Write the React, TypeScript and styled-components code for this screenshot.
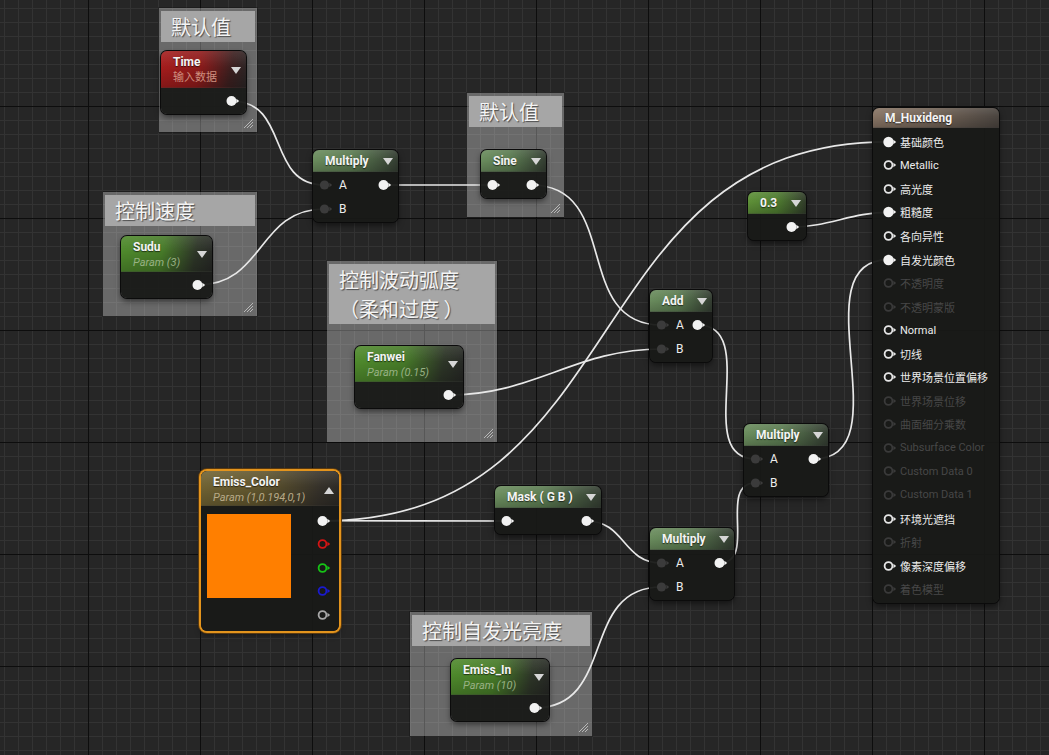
import React from "react"
import styled, { createGlobalStyle, css } from "styled-components"

const GlobalStyle = createGlobalStyle`
  html, body {
    margin: 0;
    padding: 0;
    background: #262626;
  }
  body {
    font-family: Roboto, "Noto Sans CJK SC", sans-serif;
    overflow: hidden;
  }
`

const Canvas = styled.div`
  position: relative;
  width: 1049px;
  height: 755px;
  overflow: hidden;
  background-color: #262626;
  background-image: linear-gradient(to right, #0d0d0d 1px, transparent 1px),
    linear-gradient(to bottom, #0d0d0d 1px, transparent 1px),
    linear-gradient(to right, #333333 1px, transparent 1px),
    linear-gradient(to bottom, #333333 1px, transparent 1px);
  background-size: 112px 112px, 112px 112px, 14px 14px, 14px 14px;
  background-position: 88px 106px, 88px 106px, 4px 8px, 4px 8px;
`

type Box = { $x: number; $y: number; $w: number; $h?: number }

const CommentBox = styled.div<Box>`
  position: absolute;
  left: ${(p) => p.$x}px;
  top: ${(p) => p.$y}px;
  width: ${(p) => p.$w}px;
  height: ${(p) => p.$h}px;
  box-sizing: border-box;
  padding: 3px 2px 0;
  background: rgba(255, 255, 255, 0.31);
  box-shadow: 0 0 0 1px rgba(0, 0, 0, 0.22);
`

const CommentTitle = styled.div`
  background: #a6a6a6;
  min-height: 31px;
  padding: 1px 9px 1px 10px;
  box-sizing: border-box;
  font: 20px/29px "Noto Sans CJK SC", sans-serif;
  color: #f4f4f4;
  text-shadow: 1px 1px 1px rgba(0, 0, 0, 0.55);
  white-space: pre;
`

const Grip = styled.svg`
  position: absolute;
  right: 3px;
  bottom: 3px;
`

const Wires = styled.svg`
  position: absolute;
  left: 0;
  top: 0;
  pointer-events: none;
`

type HeaderKind = "op" | "param" | "const" | "red" | "gold" | "brown"

const headerBg: Record<HeaderKind, string> = {
  op: "linear-gradient(90deg, #6b8d5e 0%, #5b7b51 45%, #343d32 100%)",
  param: "linear-gradient(100deg, #4f8a2c 0%, #467a28 45%, #2d3527 80%, #262725 100%)",
  const: "linear-gradient(90deg, #5e9038 0%, #4e7b30 50%, #313c2a 100%)",
  red: "linear-gradient(100deg, #a61d1d 0%, #8d1a1a 45%, #3c1f1f 80%, #2a2525 100%)",
  gold: "linear-gradient(100deg, #706334 0%, #5f542d 45%, #35312a 85%, #2c2a26 100%)",
  brown: "linear-gradient(90deg, #877464 0%, #6f6155 50%, #4a443f 100%)",
}

const subColor: Record<HeaderKind, string> = {
  op: "#9db58a",
  param: "#98b184",
  const: "#98b184",
  red: "#cf8f7f",
  gold: "#b8aa88",
  brown: "#bbb",
}

const GraphNode = styled.div<Box & { $glow?: boolean }>`
  position: absolute;
  left: ${(p) => p.$x}px;
  top: ${(p) => p.$y}px;
  width: ${(p) => p.$w}px;
  border-radius: 6px;
  background: rgba(24, 25, 23, 0.95);
  box-shadow: 0 0 0 1px #0b0b0b, 0 3px 6px rgba(0, 0, 0, 0.55);
  ${(p) =>
    p.$glow &&
    css`
      box-shadow: 0 0 0 2px #e3941d, 0 0 0 3px #5a3a10, 0 3px 6px rgba(0, 0, 0, 0.55);
    `}
`

const NodeHeader = styled.div<{ $kind: HeaderKind; $h: number; $pt?: number }>`
  display: flex;
  align-items: center;
  justify-content: space-between;
  height: ${(p) => p.$h}px;
  padding: ${(p) => p.$pt ?? 1}px 5px 0 12px;
  box-sizing: border-box;
  border-radius: 6px 6px 0 0;
  background: linear-gradient(
      180deg,
      rgba(255, 255, 255, 0.1),
      rgba(255, 255, 255, 0) 45%,
      rgba(0, 0, 0, 0.18)
    ),
    ${(p) => headerBg[p.$kind]};
  border-bottom: 1px solid rgba(0, 0, 0, 0.35);
`

const TitleStack = styled.div`
  display: flex;
  flex-direction: column;
  min-width: 0;
`

const NodeTitle = styled.span`
  font-weight: 700;
  font-size: 12px;
  line-height: 15px;
  color: #f4f4f4;
  text-shadow: 0 1px 1px rgba(0, 0, 0, 0.6);
  white-space: nowrap;
`

const NodeSub = styled.span<{ $kind: HeaderKind; $plain?: boolean }>`
  font-size: 11px;
  line-height: 15px;
  font-style: ${(p) => (p.$plain ? "normal" : "italic")};
  color: ${(p) => subColor[p.$kind]};
  white-space: nowrap;
`

const Caret = styled.span<{ $up?: boolean }>`
  flex: none;
  width: 0;
  height: 0;
  border-left: 5px solid transparent;
  border-right: 5px solid transparent;
  ${(p) =>
    p.$up
      ? css`
          border-bottom: 7px solid #d6d6d6;
        `
      : css`
          border-top: 7px solid #d6d6d6;
        `}
`

const NodeBody = styled.div<{ $pad?: number }>`
  padding: ${(p) => p.$pad ?? 1}px 0;
`

const PinRow = styled.div<{ $h?: number; $pl?: number; $pr?: number }>`
  display: flex;
  align-items: center;
  height: ${(p) => p.$h ?? 24}px;
  padding: 0 ${(p) => p.$pr ?? 6}px 0 ${(p) => p.$pl ?? 6}px;
`

const Spacer = styled.div`
  flex: 1;
`

const PinLabel = styled.span<{ $dim?: boolean; $gap?: number }>`
  margin-left: ${(p) => p.$gap ?? 6}px;
  font-size: 12px;
  color: ${(p) => (p.$dim ? "#474747" : "#ececec")};
  white-space: nowrap;
`

const ResultLabel = styled(PinLabel)`
  font-size: 11px;
`

const ColorBody = styled.div`
  display: flex;
  justify-content: space-between;
  align-items: flex-start;
  padding: 3px 8px 4px 6px;
`

const Swatch = styled.div`
  width: 84px;
  height: 84px;
  margin-top: 5px;
  background: #ff7f00;
`

const PinColumn = styled.div`
  display: flex;
  flex-direction: column;
`

const PinSvg = styled.svg`
  flex: none;
  display: block;
`

type PinProps = { ring?: boolean; color?: string; r?: number }

const Pin = ({ ring, color = "#f2f2f2", r = 5 }: PinProps) => (
  <PinSvg width="14" height="12" viewBox="0 0 14 12">
    {ring ? (
      <circle cx="5.5" cy="6" r="3.9" fill="none" stroke={color} strokeWidth="1.8" />
    ) : (
      <circle cx="5.5" cy="6" r={r} fill={color} />
    )}
    <path d="M10.4 3.7 L13.2 6 L10.4 8.3 Z" fill={color} />
  </PinSvg>
)

const ResizeGrip = () => (
  <Grip width="11" height="11" viewBox="0 0 11 11">
    <path d="M1 10 L10 1 M4 10 L10 4 M7 10 L10 7" stroke="#b8b8b8" strokeWidth="1" />
  </Grip>
)

type Geo = { x: number; y: number; w: number; head: number }

const N: Record<string, Geo> = {
  time: { x: 161, y: 51, w: 85, head: 37 },
  sudu: { x: 121, y: 236, w: 91, head: 36 },
  mul1: { x: 313, y: 150, w: 85, head: 22 },
  sine: { x: 481, y: 150, w: 65, head: 22 },
  fanwei: { x: 355, y: 346, w: 108, head: 36 },
  add: { x: 650, y: 290, w: 62, head: 22 },
  mul2: { x: 744, y: 424, w: 84, head: 22 },
  c03: { x: 748, y: 192, w: 58, head: 22 },
  mask: { x: 495, y: 486, w: 106, head: 22 },
  mul3: { x: 650, y: 528, w: 84, head: 22 },
  emissIn: { x: 451, y: 659, w: 98, head: 36 },
  color: { x: 201, y: 471, w: 138, head: 35 },
  result: { x: 873, y: 108, w: 126, head: 20 },
}

const RESULT_ROW = 23.55

const out = (n: Geo, i = 0): [number, number] => [n.x + n.w - 14.5, n.y + n.head + 1 + 24 * i + 12]
const inp = (n: Geo, i = 0): [number, number] => [n.x + 11.5, n.y + n.head + 1 + 24 * i + 12]
const colorOut = (): [number, number] => [N.color.x + N.color.w - 16.5, N.color.y + N.color.head + 3 + 11.75]
const resultIn = (i: number): [number, number] => [
  N.result.x + 15.5,
  N.result.y + N.result.head + 2 + RESULT_ROW * i + RESULT_ROW / 2,
]

const links: [[number, number], [number, number]][] = [
  [out(N.time), inp(N.mul1, 0)],
  [out(N.sudu), inp(N.mul1, 1)],
  [out(N.mul1), inp(N.sine)],
  [out(N.sine), inp(N.add, 0)],
  [out(N.fanwei), inp(N.add, 1)],
  [out(N.add), inp(N.mul2, 0)],
  [colorOut(), resultIn(0)],
  [colorOut(), inp(N.mask)],
  [out(N.mask), inp(N.mul3, 0)],
  [out(N.emissIn), inp(N.mul3, 1)],
  [out(N.mul3), inp(N.mul2, 1)],
  [out(N.mul2), resultIn(5)],
  [out(N.c03), resultIn(3)],
]

// UE-style spline: horizontal tangents that grow with the distance
const spline = ([x1, y1]: [number, number], [x2, y2]: [number, number]) => {
  const t = (Math.abs(x2 - x1) + Math.abs(y2 - y1)) / 3
  return `M${x1} ${y1} C${x1 + t} ${y1} ${x2 - t} ${y2} ${x2} ${y2}`
}

type OpRow = { label?: string; input?: boolean; output?: boolean }

const OpNode = ({ g, title, kind = "op", rows }: { g: Geo; title: string; kind?: HeaderKind; rows: OpRow[] }) => (
  <GraphNode $x={g.x} $y={g.y} $w={g.w}>
    <NodeHeader $kind={kind} $h={g.head}>
      <NodeTitle>{title}</NodeTitle>
      <Caret />
    </NodeHeader>
    <NodeBody>
      {rows.map((r, i) => (
        <PinRow key={i}>
          {r.input && (r.label ? <Pin color="#3b3b3b" r={4.6} /> : <Pin />)}
          {r.label && <PinLabel>{r.label}</PinLabel>}
          <Spacer />
          {r.output && <Pin />}
        </PinRow>
      ))}
    </NodeBody>
  </GraphNode>
)

const ParamNode = ({ g, title, sub, kind = "param" }: { g: Geo; title: string; sub: string; kind?: HeaderKind }) => (
  <GraphNode $x={g.x} $y={g.y} $w={g.w}>
    <NodeHeader $kind={kind} $h={g.head} $pt={2}>
      <TitleStack>
        <NodeTitle>{title}</NodeTitle>
        <NodeSub $kind={kind} $plain={kind === "red"}>
          {sub}
        </NodeSub>
      </TitleStack>
      <Caret />
    </NodeHeader>
    <NodeBody>
      <PinRow>
        <Spacer />
        <Pin />
      </PinRow>
    </NodeBody>
  </GraphNode>
)

type ResultPin = "on" | "off" | "dis"

const resultRows: [string, ResultPin][] = [
  ["基础颜色", "on"],
  ["Metallic", "off"],
  ["高光度", "off"],
  ["粗糙度", "on"],
  ["各向异性", "off"],
  ["自发光颜色", "on"],
  ["不透明度", "dis"],
  ["不透明蒙版", "dis"],
  ["Normal", "off"],
  ["切线", "off"],
  ["世界场景位置偏移", "off"],
  ["世界场景位移", "dis"],
  ["曲面细分乘数", "dis"],
  ["Subsurface Color", "dis"],
  ["Custom Data 0", "dis"],
  ["Custom Data 1", "dis"],
  ["环境光遮挡", "off"],
  ["折射", "dis"],
  ["像素深度偏移", "off"],
  ["着色模型", "dis"],
]

const ResultNode = () => (
  <GraphNode $x={N.result.x} $y={N.result.y} $w={N.result.w}>
    <NodeHeader $kind="brown" $h={N.result.head} $pt={2}>
      <NodeTitle>M_Huxideng</NodeTitle>
    </NodeHeader>
    <NodeBody $pad={2}>
      {resultRows.map(([label, mode]) => (
        <PinRow key={label} $h={RESULT_ROW} $pl={10}>
          {mode === "on" ? <Pin r={5.2} /> : <Pin ring color={mode === "dis" ? "#3a3a3a" : "#e6e6e6"} />}
          <ResultLabel $gap={3} $dim={mode === "dis"}>
            {label}
          </ResultLabel>
        </PinRow>
      ))}
    </NodeBody>
  </GraphNode>
)

const ColorNode = () => (
  <GraphNode $x={N.color.x} $y={N.color.y} $w={N.color.w} $glow>
    <NodeHeader $kind="gold" $h={N.color.head} $pt={4}>
      <TitleStack>
        <NodeTitle>Emiss_Color</NodeTitle>
        <NodeSub $kind="gold">Param (1,0.194,0,1)</NodeSub>
      </TitleStack>
      <Caret $up />
    </NodeHeader>
    <ColorBody>
      <Swatch />
      <PinColumn>
        <PinRow $h={23.5} $pl={0} $pr={0}>
          <Pin />
        </PinRow>
        {["#d41414", "#16c416", "#1a1ad0", "#a8a8a8"].map((c) => (
          <PinRow key={c} $h={23.5} $pl={0} $pr={0}>
            <Pin ring color={c} />
          </PinRow>
        ))}
      </PinColumn>
    </ColorBody>
  </GraphNode>
)

const Comment = ({ x, y, w, h, children }: { x: number; y: number; w: number; h: number; children: React.ReactNode }) => (
  <CommentBox $x={x} $y={y} $w={w} $h={h}>
    <CommentTitle>{children}</CommentTitle>
    <ResizeGrip />
  </CommentBox>
)

export default function App() {
  return (
    <>
      <GlobalStyle />
      <Canvas>
        <Comment x={159} y={8} w={98} h={124}>
          默认值
        </Comment>
        <Comment x={103} y={192} w={154} h={124}>
          控制速度
        </Comment>
        <Comment x={467} y={93} w={97} h={124}>
          默认值
        </Comment>
        <Comment x={327} y={261} w={170} h={181}>
          {"控制波动弧度\n（柔和过度 ）"}
        </Comment>
        <Comment x={410} y={612} w={182} h={124}>
          控制自发光亮度
        </Comment>

        <Wires width="1049" height="755" viewBox="0 0 1049 755">
          {links.map(([a, b], i) => (
            <path key={i} d={spline(a, b)} fill="none" stroke="#e8e8e8" strokeWidth="1.7" />
          ))}
        </Wires>

        <ParamNode g={N.time} title="Time" sub="输入数据" kind="red" />
        <ParamNode g={N.sudu} title="Sudu" sub="Param (3)" />
        <ParamNode g={N.fanwei} title="Fanwei" sub="Param (0.15)" />
        <ParamNode g={N.emissIn} title="Emiss_In" sub="Param (10)" />

        <OpNode
          g={N.mul1}
          title="Multiply"
          rows={[
            { label: "A", input: true, output: true },
            { label: "B", input: true },
          ]}
        />
        <OpNode g={N.sine} title="Sine" rows={[{ input: true, output: true }]} />
        <OpNode
          g={N.add}
          title="Add"
          rows={[
            { label: "A", input: true, output: true },
            { label: "B", input: true },
          ]}
        />
        <OpNode
          g={N.mul2}
          title="Multiply"
          rows={[
            { label: "A", input: true, output: true },
            { label: "B", input: true },
          ]}
        />
        <OpNode g={N.c03} title="0.3" kind="const" rows={[{ output: true }]} />
        <OpNode g={N.mask} title="Mask ( G B )" rows={[{ input: true, output: true }]} />
        <OpNode
          g={N.mul3}
          title="Multiply"
          rows={[
            { label: "A", input: true, output: true },
            { label: "B", input: true },
          ]}
        />

        <ColorNode />
        <ResultNode />
      </Canvas>
    </>
  )
}
